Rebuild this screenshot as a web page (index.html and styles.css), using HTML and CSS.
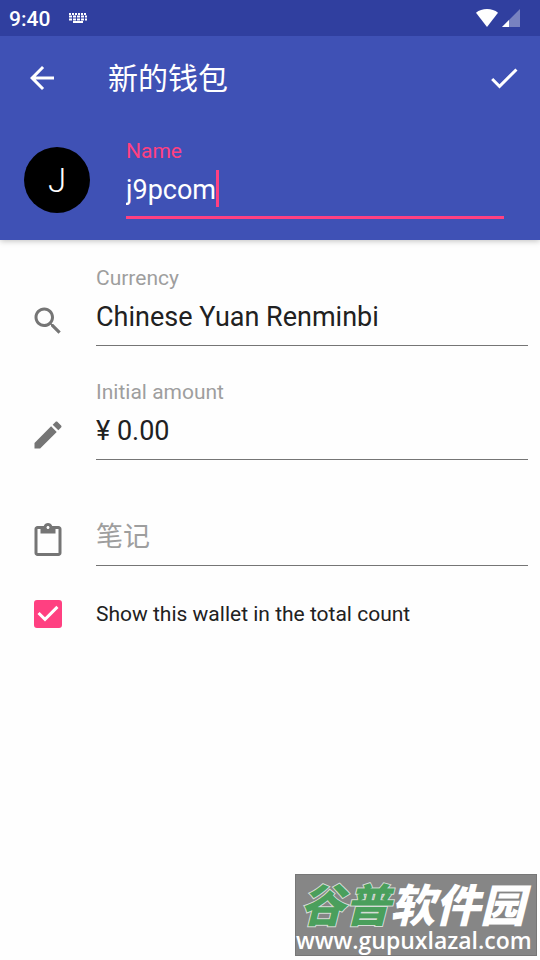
FILE: index.html
```html
<!DOCTYPE html>
<html lang="zh-CN">
<head>
<meta charset="utf-8">
<meta name="viewport" content="width=device-width, initial-scale=1">
<title>新的钱包</title>
<link rel="stylesheet" href="styles.css">
</head>
<body>
<header class="header">
  <div class="status">
    <time class="clock">9:40</time>
    <svg class="keyboard" viewBox="0 0 20 12" aria-hidden="true">
      <path d="M1 2h18" stroke-dasharray="2 1"/>
      <path d="M1 4.500h18" stroke-dasharray="3 1"/>
      <path d="M1 7.500h18" stroke-dasharray="3 1"/>
      <path d="M5 10h10"/>
    </svg>
    <svg class="wifi" viewBox="0 0 24 20" aria-hidden="true"><path d="M1 4.700C4 2.200 7.800 1 12 1s8 1.200 11 3.700L12 19z"/></svg>
    <svg class="signal" viewBox="0 0 18 18" aria-hidden="true"><path d="M0 18 18 0v18z" opacity=".35"/><path d="M0 18 7 11v7z"/></svg>
  </div>
  <div class="toolbar">
    <button class="icon-button" type="button" aria-label="Back"><svg class="icon" viewBox="0 0 24 24"><path d="M20 11H7.830l5.590-5.590L12 4l-8 8 8 8 1.410-1.410L7.830 13H20v-2z"/></svg></button>
    <h1 class="title">新的钱包</h1>
    <button class="icon-button" type="submit" form="wallet" aria-label="Save"><svg class="icon" viewBox="0 0 24 24"><path d="M9 16.170 4.830 12l-1.420 1.410L9 19 21 7l-1.410-1.410z"/></svg></button>
  </div>
  <div class="identity">
    <span class="avatar">J</span>
    <div class="name-field">
      <label class="label" for="name">Name</label>
      <div class="name-line">
        <input class="name-input" id="name" form="wallet" type="text" value="j9pcom" size="6">
        <span class="caret"></span>
      </div>
    </div>
  </div>
</header>
<form class="form" id="wallet">
  <div class="row">
    <svg class="icon" viewBox="0 0 24 24" aria-hidden="true"><path d="M15.500 14h-.79l-.28-.27C15.410 12.590 16 11.110 16 9.500 16 5.910 13.090 3 9.500 3S3 5.910 3 9.500 5.910 16 9.500 16c1.610 0 3.090-.59 4.230-1.570l.27.28v.79l5 4.990L20.490 19l-4.990-5zm-6 0C7.010 14 5 11.990 5 9.500S7.010 5 9.500 5 14 7.010 14 9.500 11.990 14 9.500 14z"/></svg>
    <div class="field">
      <label class="label" for="currency">Currency</label>
      <input class="input" id="currency" type="text" value="Chinese Yuan Renminbi">
    </div>
  </div>
  <div class="row">
    <svg class="icon" viewBox="0 0 24 24" aria-hidden="true"><path d="M3 17.250V21h3.750L17.810 9.940l-3.750-3.750L3 17.250zM20.710 7.040c.39-.39.39-1.020 0-1.410l-2.340-2.340c-.39-.39-1.020-.39-1.410 0l-1.830 1.830 3.750 3.750 1.830-1.830z"/></svg>
    <div class="field">
      <label class="label" for="amount">Initial amount</label>
      <input class="input" id="amount" type="text" value="¥ 0.00">
    </div>
  </div>
  <div class="row note-row">
    <svg class="icon" viewBox="0 0 24 24" aria-hidden="true"><path d="M19 2h-4.180C14.400.84 13.300 0 12 0c-1.300 0-2.400.84-2.820 2H5c-1.100 0-2 .9-2 2v16c0 1.100.9 2 2 2h14c1.100 0 2-.9 2-2V4c0-1.100-.9-2-2-2zm-7 0c.55 0 1 .45 1 1s-.45 1-1 1-1-.45-1-1 .45-1 1-1zm7 18H5V4h2v3h10V4h2v16z"/></svg>
    <div class="field">
      <input class="input" type="text" placeholder="笔记" aria-label="笔记">
    </div>
  </div>
  <label class="check-row" for="total">
    <span class="check">
      <input class="check-input" id="total" type="checkbox" checked>
      <svg class="check-mark" viewBox="0 0 24 24" aria-hidden="true"><path d="M10 17l-5-5 1.410-1.410L10 14.170l7.590-7.590L19 8l-9 9z"/></svg>
    </span>
    <span>Show this wallet in the total count</span>
  </label>
</form>
<aside class="watermark">
  <div class="brand"><span class="brand-green">谷普</span>软件园</div>
  <div class="site">www.gupuxlazal.com</div>
</aside>
</body>
</html>
```

FILE: styles.css
```css
* {
  box-sizing: border-box;
}

body {
  margin: 0;
  min-height: 100vh;
  display: flex;
  flex-direction: column;
  background: #fefefe;
  color: #212121;
  font-family: Roboto, "Noto Sans CJK SC", sans-serif;
}

button,
input {
  margin: 0;
  padding: 0;
  border: 0;
  border-radius: 0;
  outline: 0;
  background: none;
  color: inherit;
  font: inherit;
}

.icon {
  display: block;
  flex: none;
  width: 36px;
  height: 36px;
  fill: currentColor;
}

.header {
  background: #3f51b5;
  color: #fff;
  box-shadow: 0 1px 6px rgba(0, 0, 0, 0.25);
}

.status {
  display: flex;
  align-items: center;
  height: 36px;
  padding: 0 20px 0 9px;
  background: #303f9f;
}

.clock {
  padding-top: 1px;
  font-size: 21px;
  font-weight: 500;
}

.keyboard {
  width: 20px;
  height: 12px;
  margin-left: 18px;
  margin-right: auto;
  fill: none;
  stroke: #fff;
  stroke-width: 2;
}

.wifi {
  width: 24px;
  height: 20px;
  margin-right: 3px;
  fill: #fff;
}

.signal {
  width: 18px;
  height: 18px;
  fill: #fff;
}

.toolbar {
  display: flex;
  align-items: center;
  height: 84px;
  padding: 0 18px 0 24px;
}

.icon-button {
  cursor: pointer;
}

.title {
  flex: 1;
  margin: 0 0 0 48px;
  padding-top: 2px;
  font-size: 30px;
  font-weight: 400;
  line-height: 36px;
}

.identity {
  display: flex;
  align-items: flex-end;
  gap: 36px;
  padding: 17px 36px 21px 24px;
}

.avatar {
  display: grid;
  place-items: center;
  flex: none;
  width: 66px;
  height: 66px;
  margin-bottom: 6px;
  border-radius: 50%;
  background: #000;
  font-size: 33px;
  font-weight: 300;
}

.name-field {
  flex: 1;
  border-bottom: 3px solid #ff4081;
}

.label {
  display: block;
  color: #9e9e9e;
  font-size: 21px;
  line-height: 28px;
}

.name-field .label {
  color: #ff4081;
}

.name-line {
  display: flex;
  padding: 5px 0 9px;
  font-size: 27px;
}

.name-input {
  field-sizing: content;
  height: 37px;
  padding-top: 2px;
  caret-color: transparent;
}

.caret {
  width: 3px;
  background: #ff4081;
}

.form {
  display: flex;
  flex-direction: column;
  gap: 32px;
  padding: 24px 12px 24px 30px;
}

.row {
  display: flex;
  align-items: flex-end;
  gap: 30px;
}

.row .icon {
  margin-bottom: 7px;
  color: #757575;
}

.note-row {
  margin-top: 20px;
}

.field {
  flex: 1;
}

.input {
  display: block;
  width: 100%;
  height: 54px;
  padding-bottom: 4px;
  border-bottom: 1px solid #757575;
  font-size: 27px;
}

.input::placeholder {
  color: #9e9e9e;
}

.check-row {
  display: flex;
  align-items: center;
  gap: 30px;
  font-size: 21px;
}

.check {
  display: grid;
  grid-template-rows: 100%;
  place-items: center;
  width: 36px;
  height: 32px;
}

.check-input,
.check-mark {
  grid-area: 1 / 1;
}

.check-input {
  appearance: none;
  width: 28px;
  height: 28px;
  border: 3px solid #757575;
  border-radius: 3px;
}

.check-input:checked {
  border-color: #ff4081;
  background: #ff4081;
}

.check-mark {
  width: 36px;
  height: 36px;
  fill: #fff;
  pointer-events: none;
}

.watermark {
  align-self: flex-end;
  width: 242px;
  margin: auto 3px 4px 0;
  border: 1px solid #777;
  background: #868686;
  color: #fff;
  white-space: nowrap;
}

.brand {
  height: 50px;
  padding-left: 4px;
  font-family: "Noto Sans CJK SC", sans-serif;
  font-size: 45px;
  font-style: italic;
  font-weight: 900;
  line-height: 56px;
}

.brand-green {
  color: #4a9f5c;
  paint-order: stroke;
  -webkit-text-stroke: 2px #d5dcd6;
}

.site {
  font-family: "Open Sans", "Noto Sans", sans-serif;
  font-size: 23px;
  font-weight: 600;
  line-height: 30px;
}
```
